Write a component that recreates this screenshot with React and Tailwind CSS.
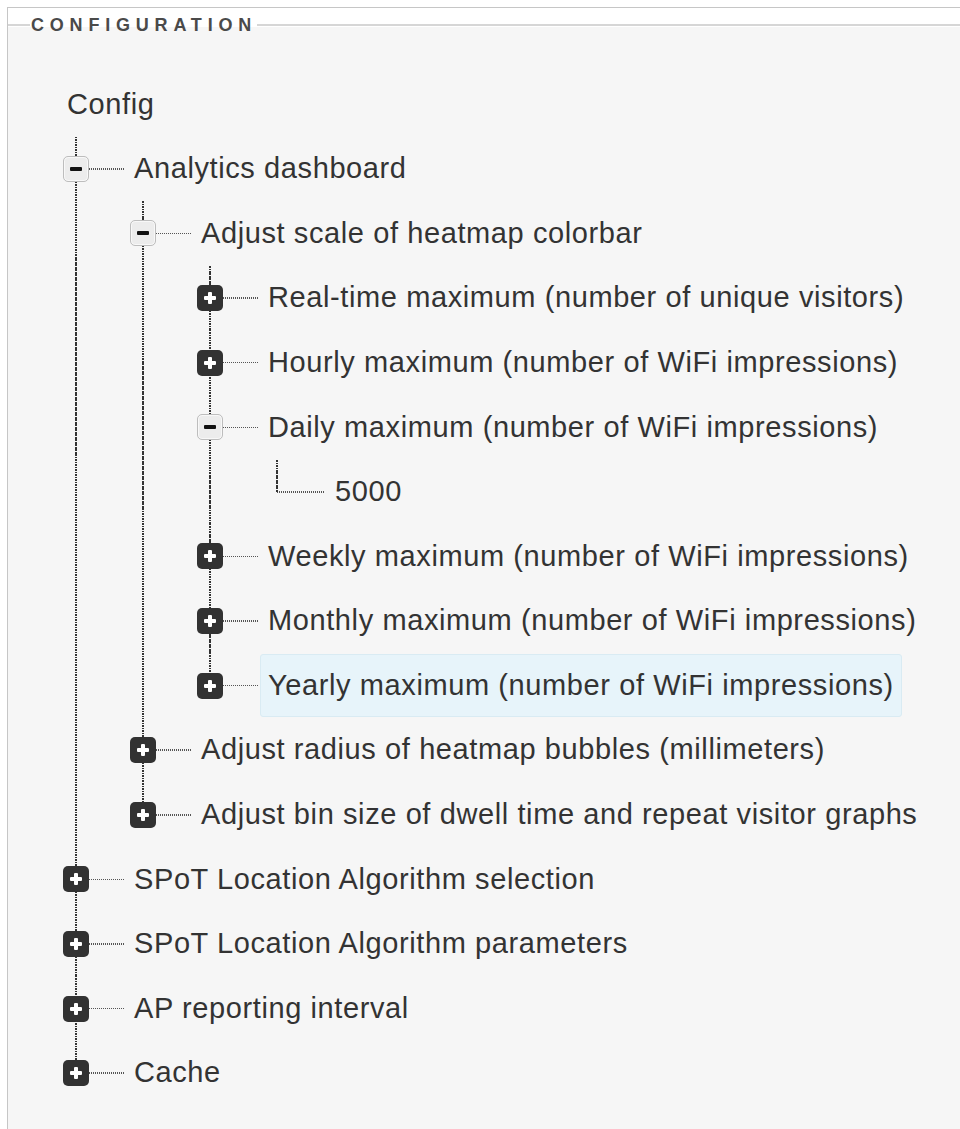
import React from "react";

const tree = {
  label: "Config",
  children: [
    {
      label: "Analytics dashboard",
      open: true,
      children: [
        {
          label: "Adjust scale of heatmap colorbar",
          open: true,
          children: [
            { label: "Real-time maximum (number of unique visitors)", children: [] },
            { label: "Hourly maximum (number of WiFi impressions)", children: [] },
            {
              label: "Daily maximum (number of WiFi impressions)",
              open: true,
              children: [{ label: "5000", leaf: true }],
            },
            { label: "Weekly maximum (number of WiFi impressions)", children: [] },
            { label: "Monthly maximum (number of WiFi impressions)", children: [] },
            { label: "Yearly maximum (number of WiFi impressions)", children: [], hover: true },
          ],
        },
        { label: "Adjust radius of heatmap bubbles (millimeters)", children: [] },
        { label: "Adjust bin size of dwell time and repeat visitor graphs", children: [] },
      ],
    },
    { label: "SPoT Location Algorithm selection", children: [] },
    { label: "SPoT Location Algorithm parameters", children: [] },
    { label: "AP reporting interval", children: [] },
    { label: "Cache", children: [] },
  ],
};

function Toggle({ open }) {
  if (open) {
    return (
      <span className="relative z-10 flex h-[26px] w-[26px] shrink-0 items-center justify-center rounded-[5px] border border-[#bdbdbd] bg-[#ececec] shadow-[inset_0_0_0_1px_#f8f8f8]">
        <span className="h-[4px] w-[12px] rounded-[1px] bg-[#111]" />
      </span>
    );
  }
  return (
    <span className="relative z-10 flex h-[26px] w-[26px] shrink-0 items-center justify-center rounded-[5px] bg-[#323232]">
      <span className="relative h-[12px] w-[12px]">
        <span className="absolute left-0 top-[4px] h-[4px] w-[12px] rounded-[1px] bg-white" />
        <span className="absolute left-[4px] top-0 h-[12px] w-[4px] rounded-[1px] bg-white" />
      </span>
    </span>
  );
}

const hDots =
  "h-[1.5px] shrink-0 bg-[repeating-linear-gradient(to_right,#555_0_1px,transparent_1px_2px)]";

function Node({ node, last }) {
  return (
    <li className="relative">
      <span
        className={
          "absolute left-[7.5px] top-0 w-[2px] bg-[repeating-linear-gradient(to_bottom,#333_0_1.5px,transparent_1.5px_2.5px)] " +
          (last ? "h-[32.3px]" : "h-full")
        }
      />
      <div className="ml-[-4.5px] flex h-[64.6px] items-center">
        {node.leaf ? (
          <>
            <span className="w-[13px] shrink-0" />
            <span className={hDots + " w-[48.5px]"} />
          </>
        ) : (
          <>
            <Toggle open={node.open} />
            <span className={hDots + " w-[35.5px]"} />
          </>
        )}
        <span
          className={
            "ml-[2px] flex h-[63px] items-center rounded-[3px] border pl-[7px] pr-[7px] " +
            (node.hover ? "border-[#d9ebf3] bg-[#e7f4fa]" : "border-transparent")
          }
        >
          {node.label}
        </span>
      </div>
      {node.open && node.children && node.children.length > 0 && (
        <ul className="pl-[67px]">
          {node.children.map((c, i) => (
            <Node key={i} node={c} last={i === node.children.length - 1} />
          ))}
        </ul>
      )}
    </li>
  );
}

export default function App() {
  return (
    <div className="min-h-[1129px] bg-white pl-[7px] pt-[7px] font-['Liberation_Sans',Arial,sans-serif]">
      <div className="flex h-[1122px] flex-col border-l border-t border-[#c6c6c6] bg-white">
        <div className="relative mt-[19px] flex-1 bg-[#f6f6f6]">
          <div className="absolute left-0 right-0 top-[-11px] flex h-[18px] items-center">
            <span className="h-[2px] w-[22px] bg-[#d6d6d6]" />
            <span className="pl-[1px] text-[18px] font-bold leading-[18px] tracking-[5.8px] text-[#4a4a4a]">
              CONFIGURATION
            </span>
            <span className="h-[2px] flex-1 bg-[#d6d6d6]" />
          </div>
          <div className="pl-[59px] pt-[45px] text-[29px] tracking-[0.6px] text-[#333]">
            <div className="flex h-[64.6px] items-center">{tree.label}</div>
            <ul>
              {tree.children.map((c, i) => (
                <Node key={i} node={c} last={i === tree.children.length - 1} />
              ))}
            </ul>
          </div>
        </div>
      </div>
    </div>
  );
}
